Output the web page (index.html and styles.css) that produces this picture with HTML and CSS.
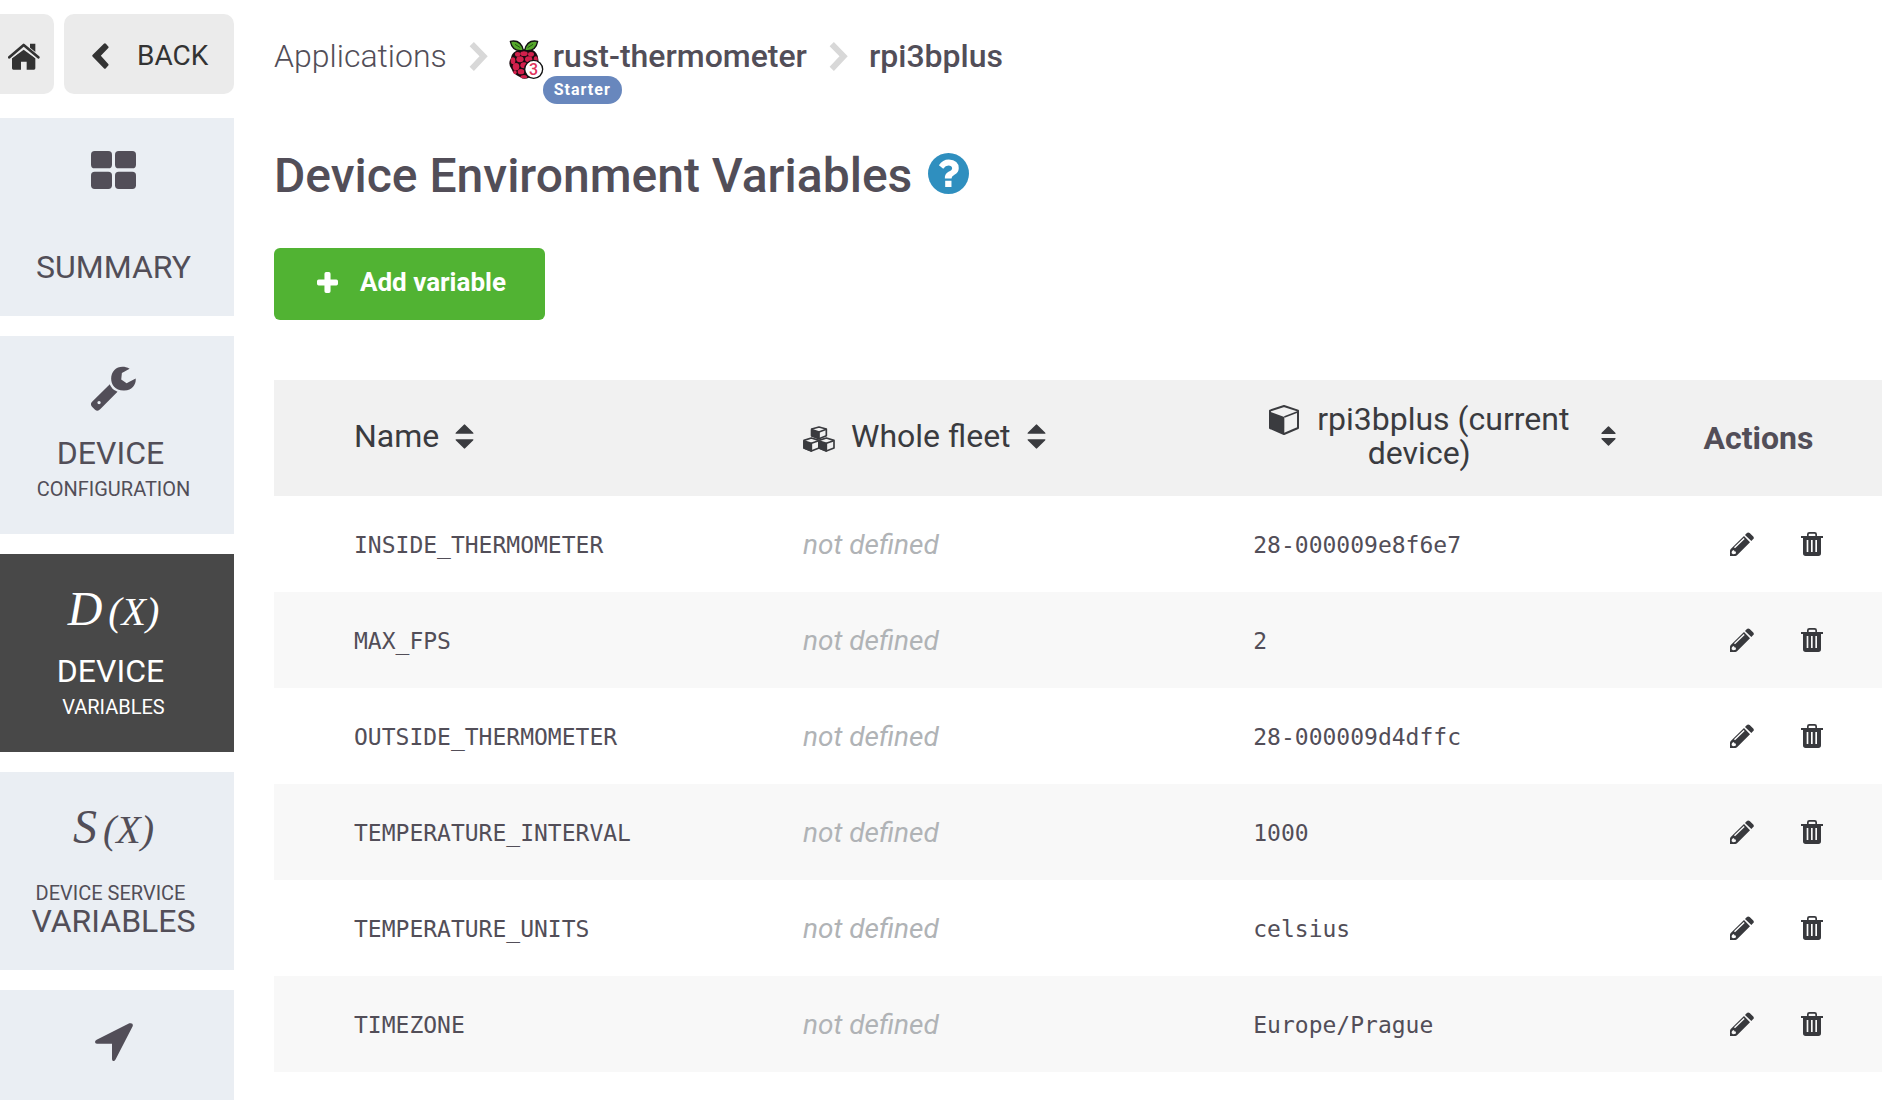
FILE: index.html
```html
<!DOCTYPE html>
<html lang="en">
<head>
<meta charset="utf-8">
<meta name="viewport" content="width=device-width, initial-scale=1">
<title>Device Environment Variables</title>
<link rel="stylesheet" href="styles.css">
</head>
<body>
<svg class="sprite" aria-hidden="true">
  <symbol id="i-sort" viewBox="0 0 56 76"><path d="M3 30Q-1 30 2 26L26 2Q28 0 30 2L54 26Q57 30 53 30ZM3 46H53Q57 46 54 50L30 74Q28 76 26 74L2 50Q-1 46 3 46Z"/></symbol>
  <symbol id="i-chevron" viewBox="0 0 56 88"><path d="M14 0L56 43L14 88L1 75L31 43L1 13Z"/></symbol>
  <symbol id="i-pencil" viewBox="0 0 72 72"><path fill-rule="evenodd" d="M50 4Q54 -1 59 3L69 13Q74 18 69 22L64 27L45 9ZM42 12L60 31L21 70Q19 72 16 72H0V56Q0 53 3 50ZM41 18L12 46L15 49L44 21ZM7 56L5 60V64L9 67L14 66L17 65L18 59L13 58L12 54Z"/></symbol>
  <symbol id="i-trash" viewBox="0 0 66 72"><path fill-rule="evenodd" d="M0 12H18V7Q18 0 25 0H41Q48 0 48 7V12H66V18H60V64Q60 72 52 72H14Q6 72 6 64V18H0ZM23 12H43V8Q43 5 40 5H26Q23 5 23 8ZM17 24V60H22V24ZM30 24V60H35V24ZM43 24V60H48V24Z"/></symbol>
</svg>
<div class="page">
  <aside class="sidebar">
    <div class="toolbar">
      <a class="tool home" href="#" aria-label="Home">
        <svg width="32" height="27" viewBox="0 0 96 81"><path d="M47 20L82 46V76Q82 80 78 80H56V56H39V80H16Q12 80 12 76V46Z"/><path d="M66 2H82V32L66 19Z"/><path d="M4 43L47 8L91 43" fill="none" stroke="#ebebeb" stroke-width="14"/><path d="M4 43L47 6L91 43" fill="none" stroke="currentColor" stroke-width="8" stroke-linecap="round" stroke-linejoin="round"/></svg>
      </a>
      <a class="tool back" href="#">
        <svg width="17" height="26" viewBox="0 0 50 77"><path d="M35 2Q38 -1 41 2L48 10Q50 12 48 15L26 38L48 62Q50 65 48 67L41 75Q38 78 35 75L2 41Q-1 38 2 35Z"/></svg>
        <span>BACK</span>
      </a>
    </div>
    <nav class="nav" aria-label="Device">
      <a class="card" href="#">
        <span class="card-icon"><svg width="45" height="38" viewBox="0 0 135 114"><rect width="63" height="52" rx="11"/><rect x="72" width="63" height="52" rx="11"/><rect y="62" width="63" height="52" rx="11"/><rect x="72" y="62" width="63" height="52" rx="11"/></svg></span>
        <span class="label-lg">SUMMARY</span>
      </a>
      <a class="card" href="#">
        <span class="card-icon"><svg width="45" height="45" viewBox="0 0 134 134"><path fill-rule="evenodd" d="M115 8L92 21L90 40L106 51L133 37C135 50 126 72 99 73C72 74 60 55 60 38C60 8 88 -7 115 8ZM56 54Q60 68 79 77L28 128Q20 137 12 130L3 121Q-4 113 4 106ZM24 104A5 5 0 1 0 24 114A5 5 0 1 0 24 104Z"/></svg></span>
        <span class="label-lg lead">DEVICE</span>
        <span class="label-sm">CONFIGURATION</span>
      </a>
      <a class="card active" href="#" aria-current="page">
        <span class="card-icon formula"><span class="fn">D</span><span class="arg">(X)</span></span>
        <span class="label-lg lead">DEVICE</span>
        <span class="label-sm">VARIABLES</span>
      </a>
      <a class="card" href="#">
        <span class="card-icon formula"><span class="fn">S</span><span class="arg">(X)</span></span>
        <span class="label-sm lead">DEVICE SERVICE</span>
        <span class="label-lg">VARIABLES</span>
      </a>
      <a class="card" href="#" aria-label="Location">
        <span class="card-icon"><svg width="38" height="38" viewBox="0 0 114 114"><path d="M103 1Q116 -2 113 10L62 109Q59 115 54 114Q51 113 51 108V62H6Q0 62 0 57Q0 53 5 50Z"/></svg></span>
      </a>
    </nav>
  </aside>

  <main class="content">
    <nav class="crumbs" aria-label="Breadcrumb">
      <a class="crumb light" href="#">Applications</a>
      <svg class="sep" width="19" height="29"><use href="#i-chevron"/></svg>
      <a class="crumb app" href="#">
        <svg width="35" height="40" viewBox="0 0 105 120">
          <path d="M20 34Q36 26 55 28Q73 26 82 40Q90 50 88 68Q88 95 62 112Q45 121 34 112Q12 102 8 88Q-5 72 6 54Q8 40 20 34Z" fill="#1a0a10"/>
          <g fill="#d2204c"><ellipse cx="45" cy="41" rx="11" ry="7"/><ellipse cx="26" cy="43" rx="8" ry="7"/><ellipse cx="66" cy="43" rx="9" ry="7"/><ellipse cx="33" cy="58" rx="11" ry="9"/><ellipse cx="59" cy="58" rx="11" ry="9"/><ellipse cx="12" cy="62" rx="7" ry="10"/><ellipse cx="80" cy="58" rx="6" ry="9"/><ellipse cx="45" cy="76" rx="11" ry="9"/><ellipse cx="21" cy="80" rx="10" ry="11"/><ellipse cx="70" cy="75" rx="10" ry="10"/><ellipse cx="36" cy="95" rx="10" ry="8"/><ellipse cx="18" cy="97" rx="5" ry="6"/><ellipse cx="45" cy="110" rx="10" ry="5"/></g>
          <g fill="#57a82c" stroke="#111" stroke-width="4" stroke-linejoin="round"><path d="M43 31Q10 36 4 4Q36 -2 43 31Z"/><path d="M47 31Q80 36 86 4Q54 -2 47 31Z"/><path d="M18 13L34 23M72 13L56 23" fill="none" stroke="#1f5c12" stroke-width="3"/></g>
          <circle cx="74" cy="88" r="27" fill="#fff" stroke="#111" stroke-width="4"/>
          <text class="model" x="74" y="105" text-anchor="middle">3</text>
        </svg>
        <span>rust-thermometer</span>
        <span class="badge">Starter</span>
      </a>
      <svg class="sep" width="19" height="29"><use href="#i-chevron"/></svg>
      <a class="crumb" href="#">rpi3bplus</a>
    </nav>

    <div class="title">
      <h1>Device Environment Variables</h1>
      <a class="help" href="#" aria-label="Help"><svg width="41" height="41" viewBox="0 0 124 124"><circle cx="62" cy="62" r="62" fill="#2f8fbf"/><path d="M33 37Q44 20 63 20Q93 22 93 46Q93 58 80 66Q71 71 71 77H51Q50 64 62 57Q73 52 73 46Q72 38 62 38Q53 38 46 48ZM52 84H71V103H52Z" fill="#fff"/></svg></a>
    </div>

    <button class="add" type="button">
      <svg width="21" height="21" viewBox="0 0 62 62"><path d="M27 0H35Q40 0 40 5V22H57Q62 22 62 27V35Q62 40 57 40H40V57Q40 62 35 62H27Q22 62 22 57V40H5Q0 40 0 35V27Q0 22 5 22H22V5Q22 0 27 0Z"/></svg>
      <span>Add variable</span>
    </button>

    <table class="vars">
      <thead>
        <tr>
          <th class="c-name" scope="col"><button type="button"><span>Name</span><svg class="sort" width="19" height="25"><use href="#i-sort"/></svg></button></th>
          <th class="c-fleet" scope="col"><button type="button"><svg class="cubes" width="32" height="26" viewBox="0 0 96 78"><g stroke="currentColor" stroke-width="5" stroke-linejoin="round"><path d="M26 9L48 3L70 9V29L48 38L26 29Z" fill="#f1f1f1"/><path d="M26 11L48 18V37L26 29Z"/><path d="M48 18L70 10" fill="none"/><path d="M3 43L25 36L48 43V66L25 75L3 66Z" fill="#f1f1f1"/><path d="M3 45L25 52V75L3 66Z"/><path d="M25 52L47 44" fill="none"/><path d="M48 43L70 36L93 43V66L70 75L48 66Z" fill="#f1f1f1"/><path d="M48 45L70 52V75L48 66Z"/><path d="M70 52L92 44" fill="none"/></g></svg><span>Whole fleet</span><svg class="sort" width="19" height="25"><use href="#i-sort"/></svg></button></th>
          <th class="c-device" scope="col"><button type="button"><span class="two-line"><svg class="cube" width="30" height="30" viewBox="0 0 90 90"><path d="M45 3L87 17V69L45 87L3 69V17Z" fill="#f1f1f1" stroke="currentColor" stroke-width="6" stroke-linejoin="round"/><path d="M3 20L46 36V87L3 69Z"/><path d="M46 36L87 20" fill="none" stroke="currentColor" stroke-width="5"/></svg>rpi3bplus (current device)</span><svg class="sort" width="15" height="20"><use href="#i-sort"/></svg></button></th>
          <th class="c-actions" scope="col">Actions</th>
        </tr>
      </thead>
      <tbody>
        <tr><td class="c-name mono">INSIDE_THERMOMETER</td><td class="none">not defined</td><td class="mono">28-000009e8f6e7</td><td class="acts"><div><button type="button" aria-label="Edit"><svg width="24" height="24"><use href="#i-pencil"/></svg></button><button type="button" aria-label="Delete"><svg width="22" height="24"><use href="#i-trash"/></svg></button></div></td></tr>
        <tr><td class="c-name mono">MAX_FPS</td><td class="none">not defined</td><td class="mono">2</td><td class="acts"><div><button type="button" aria-label="Edit"><svg width="24" height="24"><use href="#i-pencil"/></svg></button><button type="button" aria-label="Delete"><svg width="22" height="24"><use href="#i-trash"/></svg></button></div></td></tr>
        <tr><td class="c-name mono">OUTSIDE_THERMOMETER</td><td class="none">not defined</td><td class="mono">28-000009d4dffc</td><td class="acts"><div><button type="button" aria-label="Edit"><svg width="24" height="24"><use href="#i-pencil"/></svg></button><button type="button" aria-label="Delete"><svg width="22" height="24"><use href="#i-trash"/></svg></button></div></td></tr>
        <tr><td class="c-name mono">TEMPERATURE_INTERVAL</td><td class="none">not defined</td><td class="mono">1000</td><td class="acts"><div><button type="button" aria-label="Edit"><svg width="24" height="24"><use href="#i-pencil"/></svg></button><button type="button" aria-label="Delete"><svg width="22" height="24"><use href="#i-trash"/></svg></button></div></td></tr>
        <tr><td class="c-name mono">TEMPERATURE_UNITS</td><td class="none">not defined</td><td class="mono">celsius</td><td class="acts"><div><button type="button" aria-label="Edit"><svg width="24" height="24"><use href="#i-pencil"/></svg></button><button type="button" aria-label="Delete"><svg width="22" height="24"><use href="#i-trash"/></svg></button></div></td></tr>
        <tr><td class="c-name mono">TIMEZONE</td><td class="none">not defined</td><td class="mono">Europe/Prague</td><td class="acts"><div><button type="button" aria-label="Edit"><svg width="24" height="24"><use href="#i-pencil"/></svg></button><button type="button" aria-label="Delete"><svg width="22" height="24"><use href="#i-trash"/></svg></button></div></td></tr>
      </tbody>
    </table>
  </main>
</div>
</body>
</html>
```
FILE: styles.css
```css
* { box-sizing: border-box; }

body {
  margin: 0;
  background: #fff;
  color: #524e58;
  font-family: Roboto, "Liberation Sans", sans-serif;
}

a { color: inherit; text-decoration: none; }
button { font: inherit; color: inherit; border: 0; padding: 0; background: none; cursor: pointer; }
svg { display: block; flex: none; fill: currentColor; }
.sprite { position: absolute; width: 0; height: 0; }

.page { display: flex; height: 100vh; overflow: hidden; }

/* Sidebar */
.sidebar { flex: none; width: 234px; padding-top: 14px; }
.toolbar { display: flex; gap: 10px; height: 80px; color: #333; }
.tool { display: flex; align-items: center; background: #ebebeb; font-size: 28px; line-height: 32px; }
.home { width: 54px; padding: 4px 0 0 8px; border-radius: 0 10px 10px 0; }
.back { flex: 1; gap: 28px; padding: 3px 0 0 28px; border-radius: 10px; }
.nav { display: flex; flex-direction: column; gap: 20px; margin-top: 24px; }

.card {
  display: flex;
  flex-direction: column;
  align-items: center;
  flex: none;
  height: 198px;
  padding: 26px 7px 33px 0;
  background: #eaeef3;
}
.card.active { background: #484848; color: #fff; }
.card-icon { display: flex; align-items: center; height: 52px; margin-bottom: auto; }
.label-lg { font-size: 32px; line-height: 32px; }
.label-sm { font-size: 20px; line-height: 24px; }
.label-lg + .label-sm { margin-top: 8px; }
.lead { padding-right: 6px; }
.formula { align-items: baseline; gap: 6px; font-family: "Liberation Serif", serif; font-style: italic; }
.fn { font-size: 48px; line-height: 58px; }
.arg { font-size: 40px; line-height: 58px; }

/* Main column */
.content { flex: 1; min-width: 0; padding-left: 40px; }

.crumbs { display: flex; align-items: center; height: 80px; padding: 36px 0 4px; font-size: 32px; line-height: 40px; font-weight: 500; }
.crumb.light { font-weight: 300; }
.sep { margin: 0 21px 0 22px; color: #d8d8d8; }
.app { position: relative; display: flex; align-items: center; gap: 9px; }
.app svg { margin-top: 8px; }
.model { fill: #e0325c; font-size: 48px; font-weight: 500; }
.badge {
  position: absolute;
  left: 34px;
  top: 44px;
  padding: 0 11px;
  border-radius: 14px;
  background: #6887bd;
  color: #fff;
  font-size: 16px;
  font-weight: 700;
  line-height: 28px;
  letter-spacing: 1px;
}

.title { display: flex; align-items: center; gap: 16px; margin-top: 64px; height: 60px; }
.title h1 { margin: 0; padding-top: 4px; font-size: 48px; font-weight: 500; line-height: 56px; }
.help { margin-bottom: 2px; }

.add {
  display: flex;
  align-items: center;
  gap: 22px;
  height: 72px;
  margin-top: 44px;
  padding: 0 39px 4px 43px;
  border-radius: 6px;
  background: #51b333;
  color: #fff;
  font-size: 26px;
  font-weight: 700;
}

/* Variables table */
.vars { width: 100%; margin-top: 60px; border-collapse: collapse; table-layout: fixed; }
.vars th, .vars td { padding: 0; text-align: left; vertical-align: middle; }
.vars th { height: 116px; background: #f1f1f1; font-size: 32px; line-height: 34px; }
.vars td { height: 96px; }
.vars tbody tr:nth-child(even) { background: #f8f8f8; }
.vars .c-name { width: 32.9%; padding-left: 80px; }
.c-fleet, .c-device { width: 28%; }
.vars th button { display: flex; align-items: center; gap: 16px; padding-bottom: 4px; color: #3a3b3f; font-weight: 400; }
.cubes { margin-top: 6px; }
.vars .two-line { width: 332px; text-align: center; }
.cube { display: inline-block; margin-right: 18px; vertical-align: -5px; }
.vars .mono { padding-top: 2px; font-family: "DejaVu Sans Mono", monospace; font-size: 23px; }
.none { color: #b0b3b6; font-size: 28px; font-style: italic; }
.acts { color: #38393d; }
.acts div { display: flex; gap: 47px; padding-left: 26px; }
```
